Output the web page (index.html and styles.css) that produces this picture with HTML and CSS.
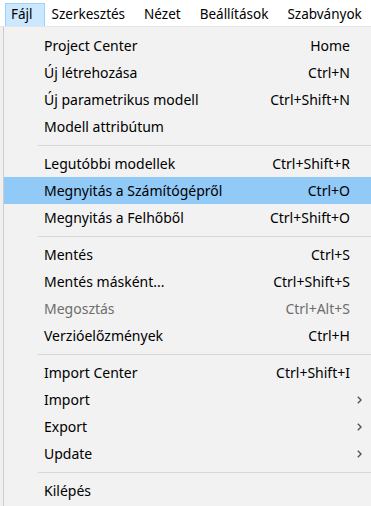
FILE: index.html
```html
<!DOCTYPE html>
<html lang="hu">
<head>
<meta charset="utf-8">
<link rel="stylesheet" href="styles.css">
</head>
<body>
<div class="menubar">
  <span class="mb-item active">Fájl</span>
  <span class="mb-item">Szerkesztés</span>
  <span class="mb-item">Nézet</span>
  <span class="mb-item">Beállítások</span>
  <span class="mb-item">Szabványok</span>
</div>
<div class="menu">
  <div class="row"><span class="label">Project Center</span><span class="key">Home</span><span class="arrow"></span></div>
  <div class="row"><span class="label">Új létrehozása</span><span class="key">Ctrl+N</span><span class="arrow"></span></div>
  <div class="row"><span class="label">Új parametrikus modell</span><span class="key">Ctrl+Shift+N</span><span class="arrow"></span></div>
  <div class="row"><span class="label">Modell attribútum</span><span class="key"></span><span class="arrow"></span></div>
  <div class="sep"></div>
  <div class="row"><span class="label">Legutóbbi modellek</span><span class="key">Ctrl+Shift+R</span><span class="arrow"></span></div>
  <div class="row hover"><span class="label">Megnyitás a Számítógépről</span><span class="key">Ctrl+O</span><span class="arrow"></span></div>
  <div class="row"><span class="label">Megnyitás a Felhőből</span><span class="key">Ctrl+Shift+O</span><span class="arrow"></span></div>
  <div class="sep"></div>
  <div class="row"><span class="label">Mentés</span><span class="key">Ctrl+S</span><span class="arrow"></span></div>
  <div class="row"><span class="label">Mentés másként...</span><span class="key">Ctrl+Shift+S</span><span class="arrow"></span></div>
  <div class="row disabled"><span class="label">Megosztás</span><span class="key">Ctrl+Alt+S</span><span class="arrow"></span></div>
  <div class="row"><span class="label">Verzióelőzmények</span><span class="key">Ctrl+H</span><span class="arrow"></span></div>
  <div class="sep"></div>
  <div class="row"><span class="label">Import Center</span><span class="key">Ctrl+Shift+I</span><span class="arrow"></span></div>
  <div class="row"><span class="label">Import</span><span class="key"></span><span class="arrow"><svg width="5" height="8" viewBox="0 0 5 8"><path d="M0.8 0.8 L4 4 L0.8 7.2" fill="none" stroke="#555" stroke-width="1.4"/></svg></span></div>
  <div class="row"><span class="label">Export</span><span class="key"></span><span class="arrow"><svg width="5" height="8" viewBox="0 0 5 8"><path d="M0.8 0.8 L4 4 L0.8 7.2" fill="none" stroke="#555" stroke-width="1.4"/></svg></span></div>
  <div class="row"><span class="label">Update</span><span class="key"></span><span class="arrow"><svg width="5" height="8" viewBox="0 0 5 8"><path d="M0.8 0.8 L4 4 L0.8 7.2" fill="none" stroke="#555" stroke-width="1.4"/></svg></span></div>
  <div class="sep"></div>
  <div class="row"><span class="label">Kilépés</span><span class="key"></span><span class="arrow"></span></div>
</div>
</body>
</html>
```
FILE: styles.css
```css
html, body {
  margin: 0;
  padding: 0;
}
body {
  background: #f0f0f0;
  font-family: "Noto Sans", "Open Sans", sans-serif;
  font-size: 14px;
  color: #000;
  overflow: hidden;
}
.menubar {
  display: flex;
  align-items: stretch;
  gap: 1px;
  height: 27px;
  background: #fff;
  border-bottom: 1px solid #e5e5e5;
  padding: 3px 0 0 5px;
  box-sizing: border-box;
  font-size: 13.5px;
  white-space: nowrap;
}
.mb-item {
  display: flex;
  align-items: center;
  padding: 0 11px 1px 5px;
  border: 1px solid transparent;
  border-bottom: none;
  line-height: 1;
}
.mb-item.active {
  background: #cce8ff;
  border-color: #99d1ff;
}
.menu {
  margin-left: 3px;
  width: 370px;
  border-left: 1px solid #cccccc;
  background: #f2f2f2;
  padding: 5px 2px 0 0;
  box-sizing: border-box;
  height: 479px;
}
.row {
  display: grid;
  grid-template-columns: 1fr auto 21px;
  align-items: center;
  height: 27px;
  padding-left: 40px;
  white-space: nowrap;
}
.row.hover {
  background: #91c9f7;
}
.row.disabled {
  color: #6d6d6d;
}
.key {
  text-align: right;
}
.arrow {
  display: flex;
  justify-content: flex-end;
  padding-right: 9px;
}
.sep {
  height: 10px;
  margin-left: 34px;
  padding: 5px 0 4px 0;
  box-sizing: border-box;
}
.sep::after {
  content: "";
  display: block;
  width: 100%;
  height: 1px;
  background: #d7d7d7;
}
```
